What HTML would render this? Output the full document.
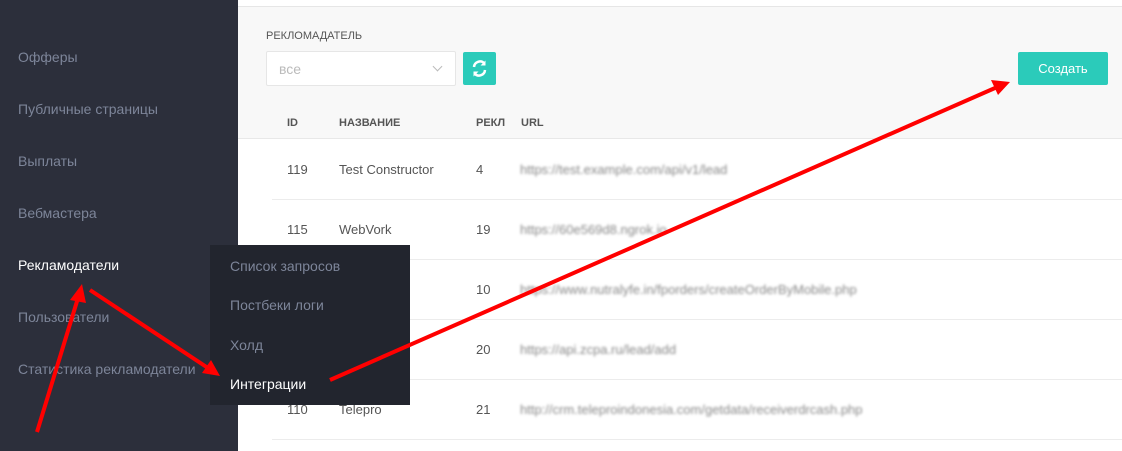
<!DOCTYPE html><html><head><meta charset="utf-8"><style>
*{margin:0;padding:0;box-sizing:border-box}
body{width:1122px;height:451px;overflow:hidden;font-family:"Liberation Sans",sans-serif;background:#fff;position:relative}
.sb{position:absolute;left:0;top:0;width:238px;height:451px;background:#2c2f3b}
.sb div{position:absolute;left:18px;font-size:14px;color:#7d8599}
.top{position:absolute;left:238px;top:6px;right:0;height:133px;background:#f8f8f8;border-top:1px solid #e6e6e6;border-bottom:1px solid #e8e8e8}
.t{position:absolute;font-size:13px;color:#555}
.h{position:absolute;font-size:11px;font-weight:bold;color:#555}
.u{position:absolute;left:520px;font-size:13px;color:#888;filter:blur(1.3px)}
.ln{position:absolute;left:272px;right:0;height:1px;background:#ececec}
.dd{position:absolute;left:210px;top:245px;width:200px;height:160px;background:#22252e}
.dd div{position:absolute;left:20px;font-size:14px;color:#7d8599}
</style></head><body>
<div class="sb">
<div style="top:49px">Офферы</div>
<div style="top:101px">Публичные страницы</div>
<div style="top:153px">Выплаты</div>
<div style="top:205px">Вебмастера</div>
<div style="top:257px;color:#fff">Рекламодатели</div>
<div style="top:309px">Пользователи</div>
<div style="top:361px">Статистика рекламодатели</div>
</div>
<div class="top"></div>
<div style="position:absolute;left:266px;top:30px;font-size:11px;color:#555">РЕКЛОМАДАТЕЛЬ</div>
<div style="position:absolute;left:266px;top:51px;width:190px;height:35px;background:#fff;border:1px solid #e6e6e6;border-radius:2px;font-size:14px;color:#bbb;padding:9px 12px">все<span style="position:absolute;right:14px;top:11px;width:7px;height:7px;border-right:1.5px solid #bbb;border-bottom:1.5px solid #bbb;transform:rotate(45deg)"></span></div>
<div style="position:absolute;left:463px;top:52px;width:33px;height:33px;background:#2bcbba;border-radius:2px"><svg width="33" height="33" viewBox="0 0 33 33"><path d="M11 15a6 6 0 0 1 10.5-3.5M22 18a6 6 0 0 1-10.5 3.5" stroke="#fff" stroke-width="2.5" fill="none"/><path d="M22.5 8.5v5h-5z M10.5 24.5v-5h5z" fill="#fff"/></svg></div>
<div style="position:absolute;left:1018px;top:52px;width:90px;height:33px;background:#2bcbba;border-radius:2px;color:#fff;font-size:13px;text-align:center;line-height:33px">Создать</div>
<div class="h" style="left:287px;top:117px">ID</div>
<div class="h" style="left:339px;top:117px">НАЗВАНИЕ</div>
<div class="h" style="left:476px;top:117px">РЕКЛ</div>
<div class="h" style="left:521px;top:117px">URL</div>
<div class="t" style="left:287px;top:162px">119</div><div class="t" style="left:339px;top:162px">Test Constructor</div><div class="t" style="left:476px;top:162px">4</div><div class="u" style="top:162px">https://test.example.com/api/v1/lead</div>
<div class="ln" style="top:199px"></div>
<div class="t" style="left:287px;top:222px">115</div><div class="t" style="left:339px;top:222px">WebVork</div><div class="t" style="left:476px;top:222px">19</div><div class="u" style="top:222px">https://60e569d8.ngrok.io</div>
<div class="ln" style="top:259px"></div>
<div class="t" style="left:476px;top:282px">10</div><div class="u" style="top:282px">https://www.nutralyfe.in/fporders/createOrderByMobile.php</div>
<div class="ln" style="top:319px"></div>
<div class="t" style="left:476px;top:342px">20</div><div class="u" style="top:342px">https://api.zcpa.ru/lead/add</div>
<div class="ln" style="top:379px"></div>
<div class="t" style="left:287px;top:402px">110</div><div class="t" style="left:339px;top:402px">Telepro</div><div class="t" style="left:476px;top:402px">21</div><div class="u" style="top:402px">http://crm.teleproindonesia.com/getdata/receiverdrcash.php</div>
<div class="ln" style="top:439px"></div>
<div class="dd">
<div style="top:13px">Список запросов</div>
<div style="top:52px">Постбеки логи</div>
<div style="top:92px">Холд</div>
<div style="top:131px;color:#fff">Интеграции</div>
</div>
<svg style="position:absolute;left:0;top:0" width="1122" height="451"><g stroke="#f00" stroke-width="4" fill="#f00">
<line x1="37" y1="432" x2="78" y2="298"/><polygon points="82,284 70,300 86,303" stroke="none"/>
<line x1="90" y1="290" x2="208" y2="368"/><polygon points="220,376 202,373 211,360" stroke="none"/>
<line x1="330" y1="380" x2="995" y2="88"/><polygon points="1010,82 991,80 998,95" stroke="none"/>
</g></svg>
</body></html>
